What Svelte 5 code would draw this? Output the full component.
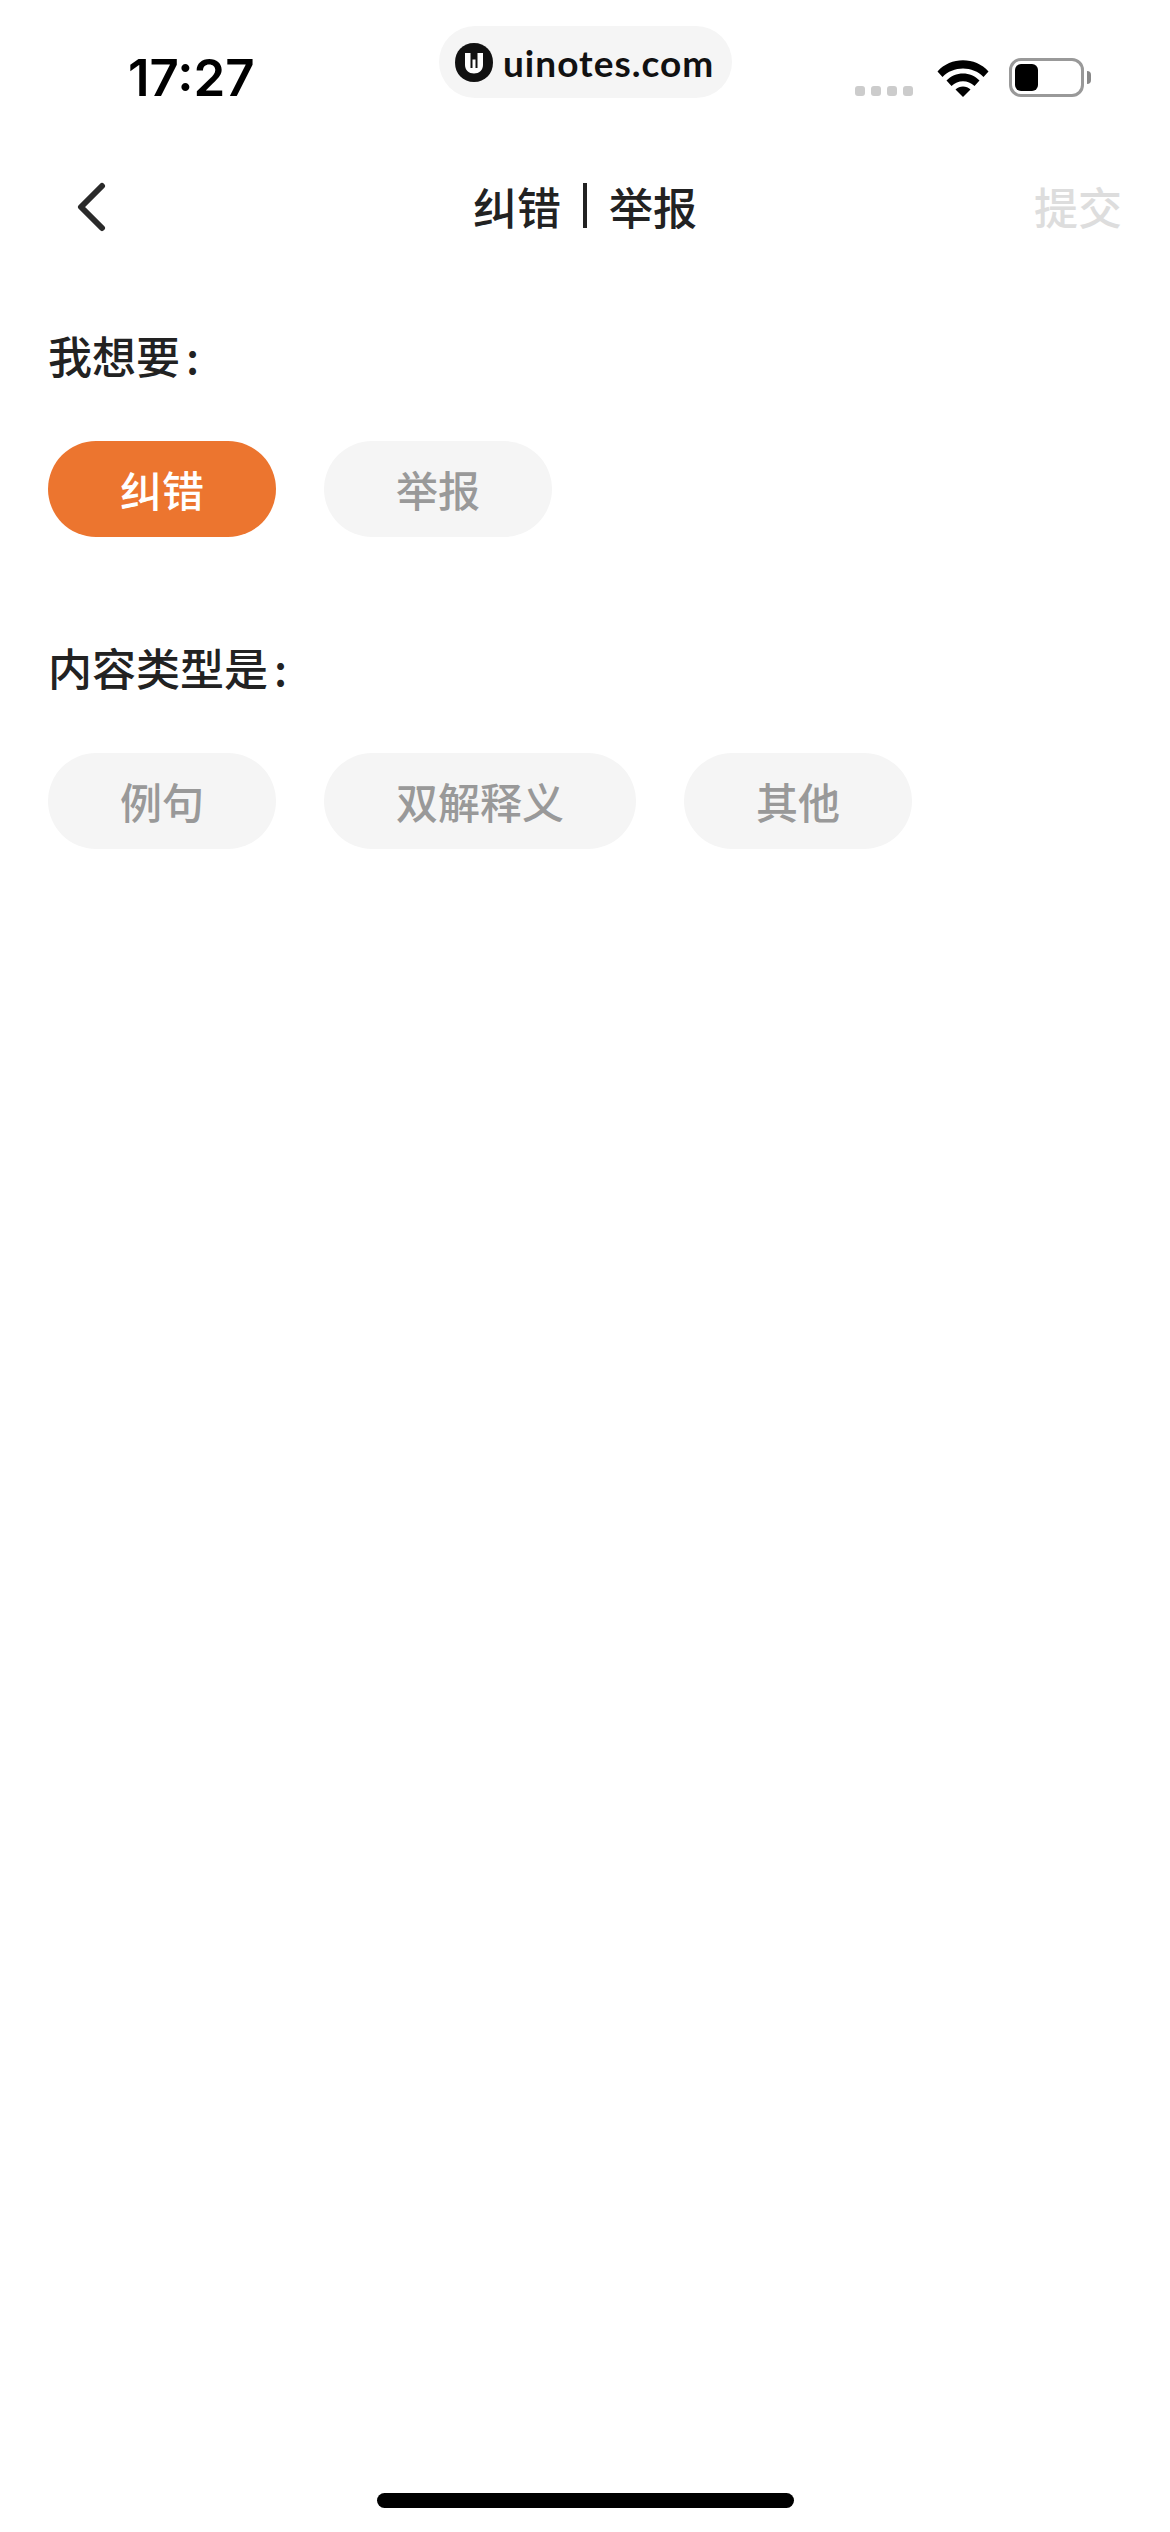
<script>
	let intents = $state([
		{ label: '纠错', on: true },
		{ label: '举报', on: false }
	]);
	const kinds = ['例句', '双解释义', '其他'];
</script>

<div class="page">
	<header class="status">
		<span class="time">17:27</span>
		<div class="status-right">
			<div class="dots">
				<i></i><i></i><i></i><i></i>
			</div>
			<svg class="wifi" width="52" height="38" viewBox="0 0 52 38">
				<path d="M0.5 12.500C13.500 -2.500 38.500 -2.500 51.500 12.500L46.500 18C36 6.500 16 6.500 5.500 18Z" fill="#000" />
				<path d="M9.500 21.500C18 12 34 12 42.500 21.500L37.500 27C31 20.500 21 20.500 14.500 27Z" fill="#000" />
				<path d="M18.500 30.500C22.500 26.500 29.500 26.500 33.500 30.500L26 38Z" fill="#000" />
			</svg>
			<div class="battery">
				<div class="level"></div>
			</div>
			<div class="nub"></div>
		</div>
		<div class="watermark">
			<svg width="38" height="39" viewBox="0 0 38 39">
				<path d="M19 0C30 0 38 8 38 19.500C38 31 30 39 19 39C8 39 0 31 0 19.500C0 8 8 0 19 0Z" fill="#111" />
				<path d="M10 10H15.500V25H17.500V16.500H20.500V25H22.500V10H28V22C28 27 24 30.500 19 30.500C14 30.500 10 27 10 22Z" fill="#fff" />
			</svg>
			<span>uinotes.com</span>
		</div>
	</header>

	<nav class="bar">
		<svg class="back" width="34" height="54" viewBox="0 0 34 54">
			<path d="M30 5L9 26L30 47" fill="none" stroke="#2a2a2a" stroke-width="6" stroke-linecap="round" stroke-linejoin="round" />
		</svg>
		<h1>纠错<b></b>举报</h1>
		<span class="submit">提交</span>
	</nav>

	<main class="form">
		<section>
			<h2>我想要<span class="colon">:</span></h2>
			<div class="pills">
				{#each intents as item}
					<button class:on={item.on}>{item.label}</button>
				{/each}
			</div>
		</section>
		<section>
			<h2>内容类型是<span class="colon">:</span></h2>
			<div class="pills">
				{#each kinds as label}
					<button>{label}</button>
				{/each}
			</div>
		</section>
	</main>

	<div class="home"></div>
</div>

<style>
	:global(body) {
		margin: 0;
		background: #fff;
	}
	.page {
		position: relative;
		display: flex;
		flex-direction: column;
		height: 2532px;
		font-family: "Noto Sans CJK SC", "Noto Sans", sans-serif;
		color: #222;
	}
	.status {
		display: flex;
		justify-content: space-between;
		height: 150px;
		box-sizing: border-box;
		padding: 50px 79px 0 128px;
	}
	.time {
		font: 600 51px/56px Inter, sans-serif;
		color: #000;
	}
	.status-right {
		display: flex;
		align-items: flex-start;
		padding-top: 8px;
	}
	.dots {
		display: flex;
		gap: 6px;
		margin: 28px 24px 0 0;
	}
	.dots i {
		width: 10px;
		height: 10px;
		border-radius: 3px;
		background: #ccc;
	}
	.wifi {
		margin-top: 1px;
	}
	.battery {
		width: 75px;
		height: 39px;
		box-sizing: border-box;
		margin-left: 20px;
		padding: 3px;
		border: 3px solid #999;
		border-radius: 12px;
	}
	.level {
		width: 23px;
		height: 27px;
		border-radius: 6px;
		background: #000;
	}
	.nub {
		width: 4px;
		height: 13px;
		margin: 13px 0 0 3px;
		border-radius: 0 6px 6px 0;
		background: #888;
	}
	.watermark {
		position: absolute;
		left: 439px;
		top: 26px;
		display: flex;
		align-items: center;
		gap: 10px;
		width: 293px;
		height: 72px;
		box-sizing: border-box;
		padding-left: 16px;
		border-radius: 36px;
		background: #f5f5f5;
		font: 700 37px/1 Lato, sans-serif;
		letter-spacing: 1px;
		color: #111;
	}
	.bar {
		display: grid;
		grid-template-columns: 1fr auto 1fr;
		align-items: center;
		height: 116px;
		padding: 0 48px 0 72px;
	}
	.back {
		flex: none;
	}
	h1 {
		display: flex;
		align-items: center;
		gap: 22px;
		margin: 0 0 5px -24px;
		font-size: 44px;
		line-height: 64px;
		font-weight: 500;
	}
	h1 b {
		width: 4px;
		height: 45px;
		background: #222;
	}
	.submit {
		justify-self: end;
		margin-bottom: 5px;
		font-size: 44px;
		line-height: 64px;
		font-weight: 500;
		color: #ddd;
	}
	.form {
		display: flex;
		flex-direction: column;
		gap: 98px;
		padding: 57px 48px 0;
	}
	h2 {
		margin: 0 0 54px;
		font-size: 44px;
		line-height: 64px;
		font-weight: 500;
	}
	.colon {
		margin-left: 6px;
	}
	.pills {
		display: flex;
		gap: 48px;
	}
	button {
		height: 96px;
		padding: 0 72px;
		border: 0;
		border-radius: 48px;
		background: #f5f5f5;
		font: 500 42px/1 "Noto Sans CJK SC", sans-serif;
		color: #999;
	}
	button.on {
		background: #ec752f;
		color: #fff;
	}
	.home {
		position: absolute;
		left: 377px;
		top: 2493px;
		width: 417px;
		height: 15px;
		border-radius: 8px;
		background: #000;
	}
</style>
